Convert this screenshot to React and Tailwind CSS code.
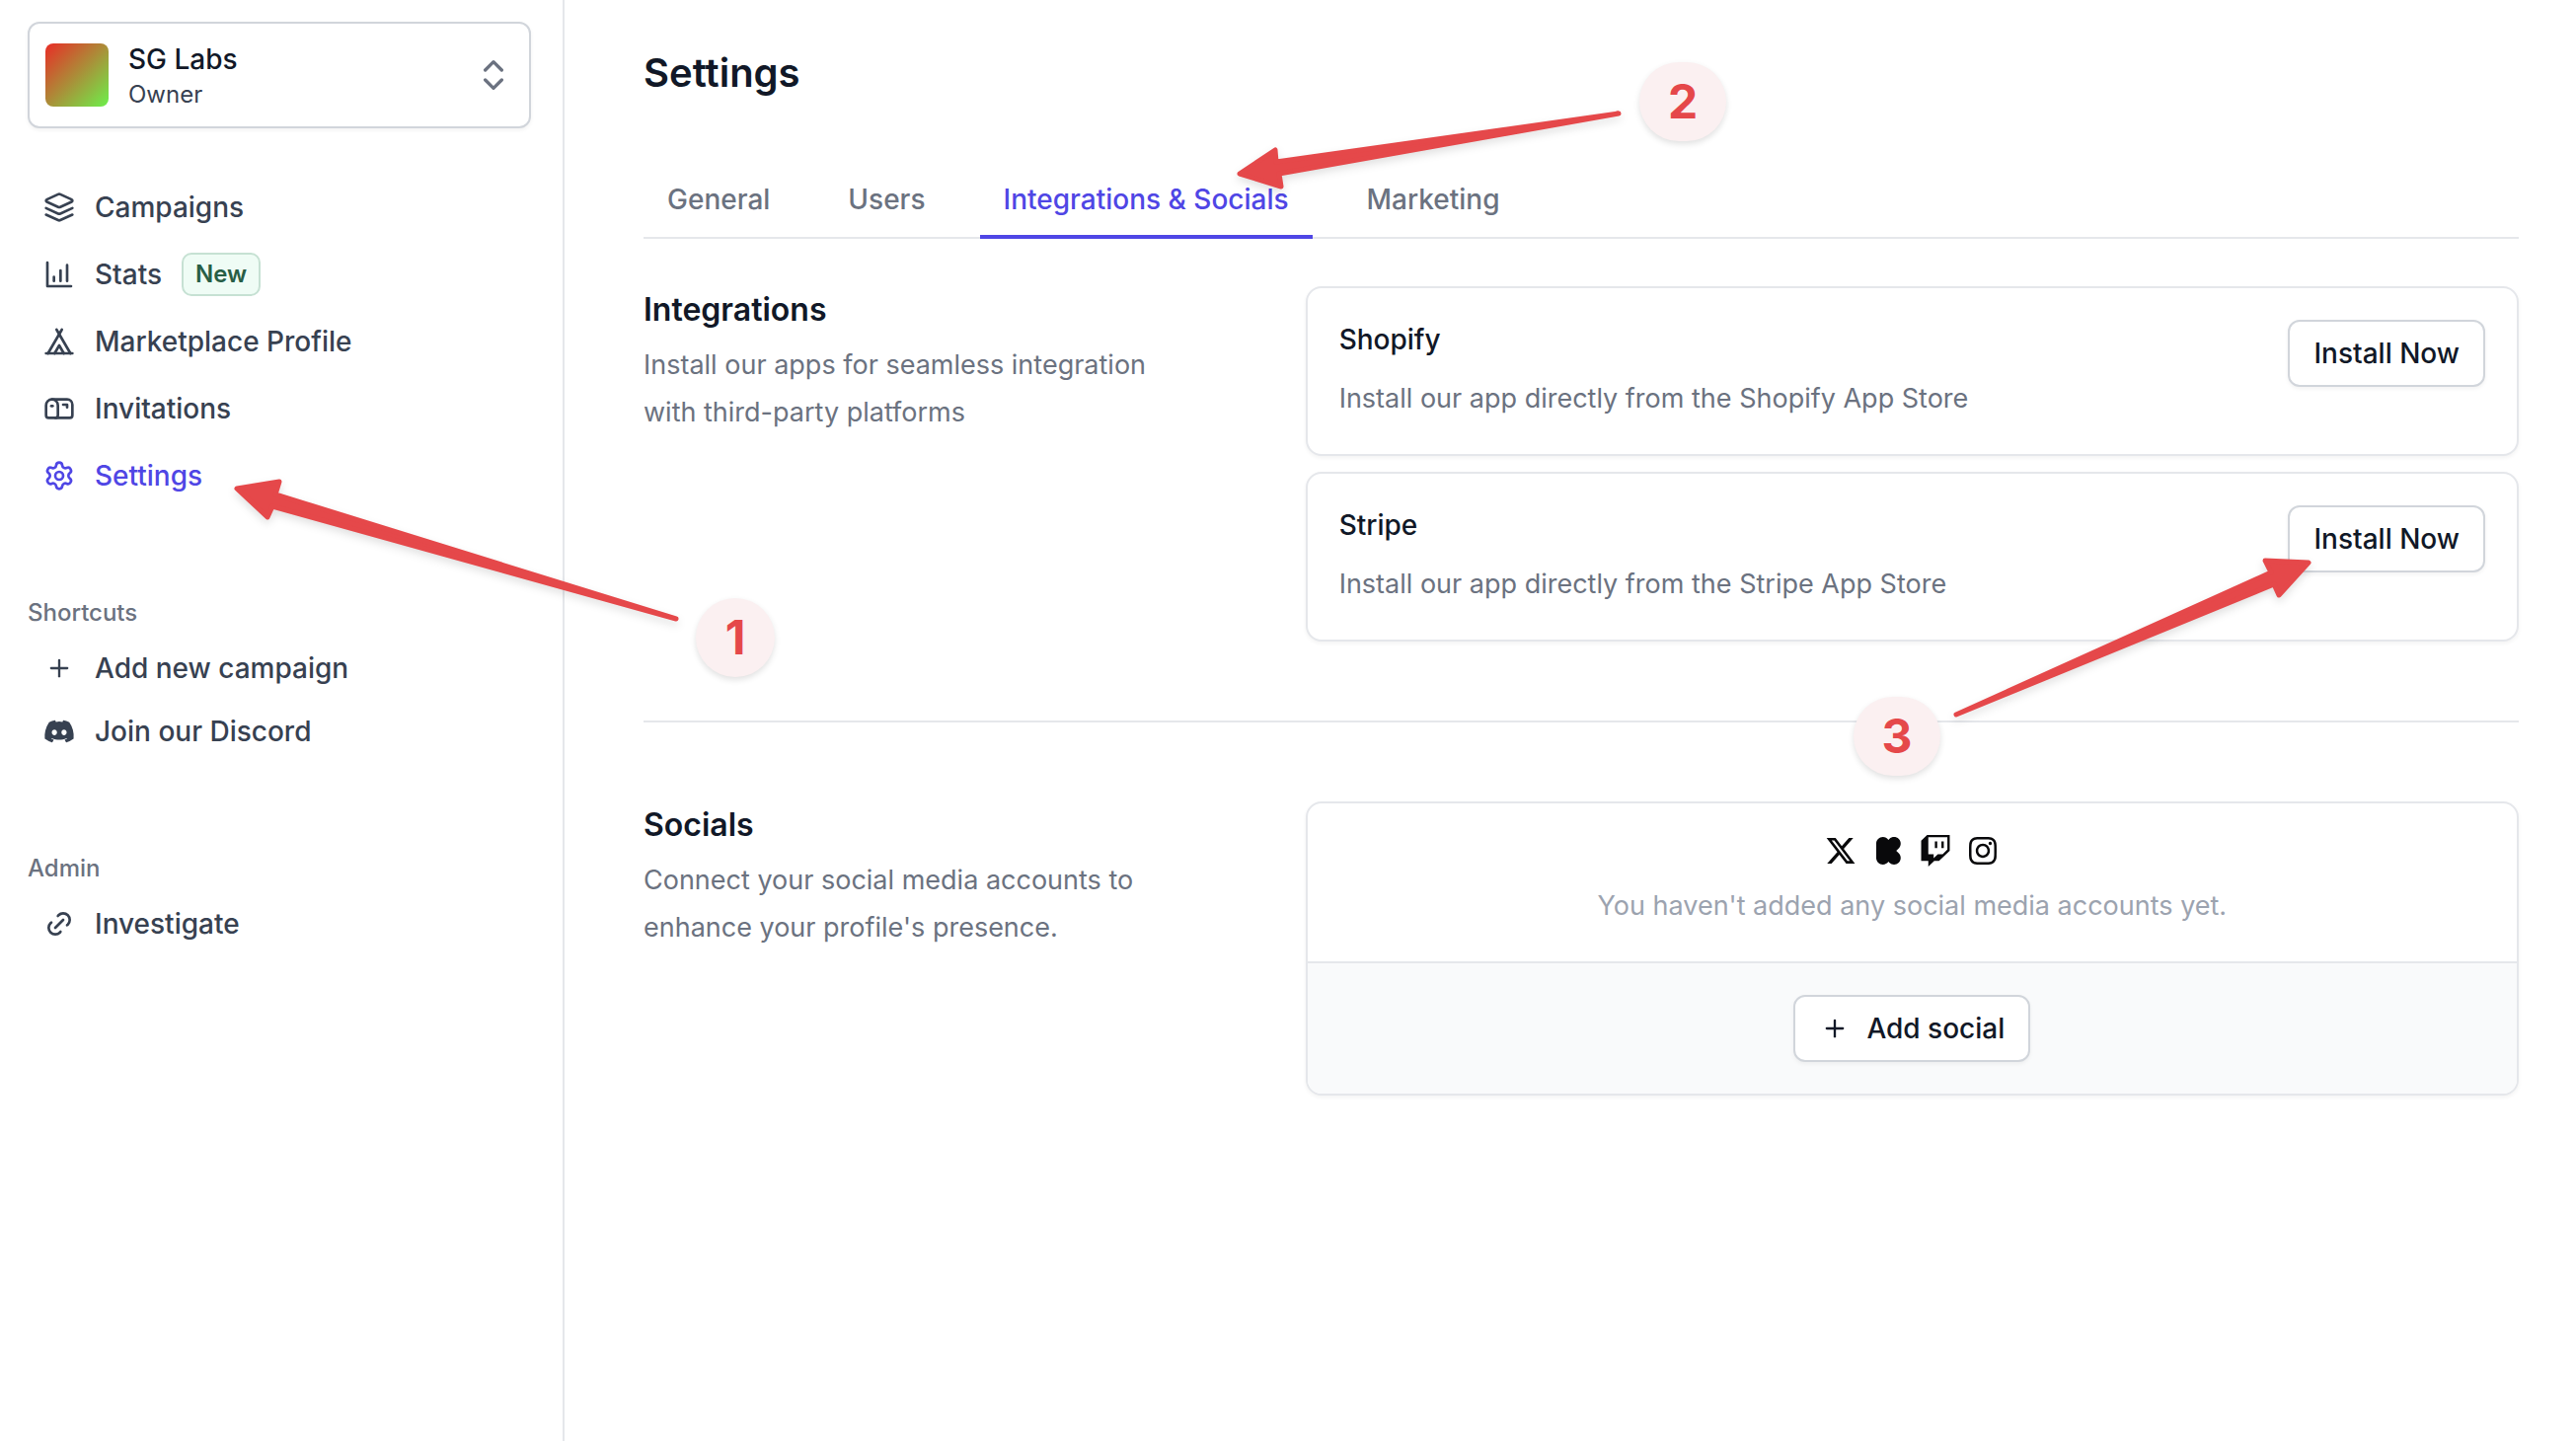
import { ChevronsUpDown, Mailbox, Plus, Settings, Tent } from "lucide-react";
import { FaDiscord, FaInstagram, FaKickstarterK, FaTwitch, FaXTwitter } from "react-icons/fa6";
import { TbLink } from "react-icons/tb";

function Stroked({ children }) {
  return (
    <svg
      className="size-8"
      viewBox="0 0 24 24"
      fill="none"
      stroke="currentColor"
      strokeWidth="2"
      strokeLinecap="round"
      strokeLinejoin="round"
      aria-hidden="true"
    >
      {children}
    </svg>
  );
}

function LayersIcon() {
  return (
    <Stroked>
      <path d="m12.83 2.18a2 2 0 0 0-1.66 0L2.6 6.08a1 1 0 0 0 0 1.83l8.58 3.91a2 2 0 0 0 1.66 0l8.58-3.9a1 1 0 0 0 0-1.83Z" />
      <path d="m22 12.65-9.17 4.16a2 2 0 0 1-1.66 0L2 12.65" />
      <path d="m22 17.65-9.17 4.16a2 2 0 0 1-1.66 0L2 17.65" />
    </Stroked>
  );
}

function StatsIcon() {
  return (
    <Stroked>
      <path d="M3 3v18h18" />
      <path d="M8 17v-3" />
      <path d="M13 17V9" />
      <path d="M18 17V5" />
    </Stroked>
  );
}

const PlusIcon = () => <Plus className="size-7" />;

const mainNav = [
  { label: "Campaigns", icon: <LayersIcon /> },
  { label: "Stats", icon: <StatsIcon />, badge: "New" },
  { label: "Marketplace Profile", icon: <Tent className="size-8" /> },
  { label: "Invitations", icon: <Mailbox className="size-8" /> },
  { label: "Settings", icon: <Settings className="size-8" />, active: true },
];

const shortcuts = [
  { label: "Add new campaign", icon: <PlusIcon /> },
  { label: "Join our Discord", icon: <FaDiscord className="size-8" /> },
];

const admin = [{ label: "Investigate", icon: <TbLink className="size-8" /> }];

function NavItem({ label, icon, badge, active }) {
  return (
    <li>
      <a
        href="#"
        aria-current={active ? "page" : undefined}
        className={`flex h-16 items-center gap-5 px-4 text-[28px] leading-10 font-medium ${
          active ? "text-[#4f46e5]" : "text-[#374151]"
        }`}
      >
        <span className="flex size-8 shrink-0 items-center justify-center">{icon}</span>
        {label}
        {badge && (
          <span className="rounded-[10px] border-2 border-[#c6e1d3] bg-[#effcf5] px-3 text-2xl leading-10 font-semibold text-[#285e46]">
            {badge}
          </span>
        )}
      </a>
    </li>
  );
}

function NavGroup({ title, items }) {
  return (
    <section className="mt-[91px]">
      <h2 className="text-2xl leading-8 font-medium text-[#6b7280]">{title}</h2>
      <ul className="mt-2">
        {items.map((item) => (
          <NavItem key={item.label} {...item} />
        ))}
      </ul>
    </section>
  );
}

function Sidebar() {
  return (
    <aside className="w-[572px] shrink-0 border-r-2 border-[#e5e7eb] pt-[22px] pr-8 pl-7">
      <button
        type="button"
        className="flex w-full items-center gap-5 rounded-xl border-2 border-[#d1d5db] bg-white p-4 text-left shadow-[0_2px_4px_rgba(0,0,0,0.05)]"
      >
        <span className="size-16 rounded-lg bg-linear-to-br/srgb from-[#e92c26] to-[#6cf04b]" />
        <span className="flex flex-1 flex-col">
          <span className="text-[28px] leading-10 font-medium text-[#111827]">SG Labs</span>
          <span className="text-2xl leading-8 text-[#374151]">Owner</span>
        </span>
        <ChevronsUpDown className="size-10 text-[#6b7280]" />
      </button>
      <nav>
        <ul className="mt-12 flex flex-col gap-1">
          {mainNav.map((item) => (
            <NavItem key={item.label} {...item} />
          ))}
        </ul>
        <NavGroup title="Shortcuts" items={shortcuts} />
        <NavGroup title="Admin" items={admin} />
      </nav>
    </aside>
  );
}

const tabs = ["General", "Users", "Integrations & Socials", "Marketing"];

function Tabs() {
  return (
    <nav className="mt-20 flex gap-[31px] border-b-2 border-[#e5e7eb]">
      {tabs.map((tab) => {
        const active = tab === "Integrations & Socials";
        return (
          <a
            key={tab}
            href="#"
            aria-current={active ? "page" : undefined}
            className={`-mb-0.5 border-b-4 px-6 pb-4 text-[28px] leading-10 font-medium ${
              active ? "border-[#4f46e5] text-[#4f46e5]" : "border-transparent text-[#6b7280]"
            }`}
          >
            {tab}
          </a>
        );
      })}
    </nav>
  );
}

function OutlineButton({ children }) {
  return (
    <button
      type="button"
      className="flex h-[68px] shrink-0 items-center gap-4 rounded-xl border-2 border-[#d1d5db] bg-white px-6 text-[28px] font-medium text-[#111827] shadow-[0_2px_4px_rgba(0,0,0,0.05)]"
    >
      {children}
    </button>
  );
}

function Section({ title, text, children }) {
  return (
    <section className="grid grid-cols-[1fr_2fr] gap-14">
      <div>
        <h2 className="text-[32px] leading-12 font-semibold text-[#111827]">{title}</h2>
        <p className="mt-2 max-w-[540px] text-[27px] leading-12 text-[#6b7280]">{text}</p>
      </div>
      <div className="flex flex-col gap-4">{children}</div>
    </section>
  );
}

function IntegrationCard({ name }) {
  return (
    <article className="flex items-start justify-between rounded-2xl border-2 border-[#e5e7eb] bg-white p-8 shadow-[0_2px_4px_rgba(0,0,0,0.05)]">
      <div>
        <h3 className="text-[28px] leading-10 font-medium text-[#111827]">{name}</h3>
        <p className="mt-4 text-[27px] leading-12 text-[#6b7280]">
          Install our app directly from the {name} App Store
        </p>
      </div>
      <OutlineButton>Install Now</OutlineButton>
    </article>
  );
}

function SocialsCard() {
  return (
    <article className="overflow-hidden rounded-2xl border-2 border-[#e5e7eb] bg-white shadow-[0_2px_4px_rgba(0,0,0,0.05)]">
      <div className="flex flex-col items-center gap-4 p-8">
        <div className="flex gap-4 text-[#09090b]">
          <FaXTwitter className="size-8" />
          <FaKickstarterK className="size-8" />
          <FaTwitch className="size-8" />
          <FaInstagram className="size-8" />
        </div>
        <p className="text-[27px] leading-12 text-[#9ca3af]">
          You haven't added any social media accounts yet.
        </p>
      </div>
      <div className="flex justify-center border-t-2 border-[#e5e7eb] bg-[#f9fafb] py-8">
        <OutlineButton>
          <span className="flex size-8 items-center justify-center">
            <PlusIcon />
          </span>
          Add social
        </OutlineButton>
      </div>
    </article>
  );
}

const arrows = [
  "M240 495 283 488 279 501 685 627 276 513 271 524Z",
  "M1256 176 1292 152 1293 164 1640 115 1296 176 1298 189Z",
  "M2339 570 2295 568 2301 580 1982 724 2304 592 2309 603Z",
];

function Annotations() {
  return (
    <div className="pointer-events-none absolute inset-0 overflow-hidden">
      <svg
        className="absolute top-0 left-0 drop-shadow-[0_4px_4px_rgba(0,0,0,0.12)]"
        width="2610"
        height="1460"
        viewBox="0 0 2610 1460"
        aria-hidden="true"
      >
        {arrows.map((d) => (
          <path key={d} d={d} fill="#e5484a" stroke="#e5484a" strokeWidth="5" strokeLinejoin="round" />
        ))}
      </svg>
      <Marker className="top-[606px] left-[705px] w-20">1</Marker>
      <Marker className="top-[63px] left-[1661px] w-[88px]">2</Marker>
      <Marker className="top-[706px] left-[1878px] w-[88px]">3</Marker>
    </div>
  );
}

function Marker({ className, children }) {
  return (
    <span
      className={`absolute flex h-20 items-center justify-center rounded-full bg-[#fbf0f1] text-5xl font-bold text-[#e5484a] shadow-[0_3px_6px_rgba(0,0,0,0.12)] ${className}`}
    >
      {children}
    </span>
  );
}

export default function App() {
  return (
    <div className="relative flex min-h-screen bg-white font-['Inter',sans-serif]">
      <Sidebar />
      <main className="min-w-0 flex-1 pt-[46px] pr-[58px] pl-20">
        <h1 className="text-[40px] leading-14 font-semibold text-[#111827]">Settings</h1>
        <Tabs />
        <div className="mt-12">
          <Section
            title="Integrations"
            text="Install our apps for seamless integration with third-party platforms"
          >
            <IntegrationCard name="Shopify" />
            <IntegrationCard name="Stripe" />
          </Section>
          <hr className="my-20 border-t-2 border-[#e5e7eb]" />
          <Section
            title="Socials"
            text="Connect your social media accounts to enhance your profile's presence."
          >
            <SocialsCard />
          </Section>
        </div>
      </main>
      <Annotations />
    </div>
  );
}
